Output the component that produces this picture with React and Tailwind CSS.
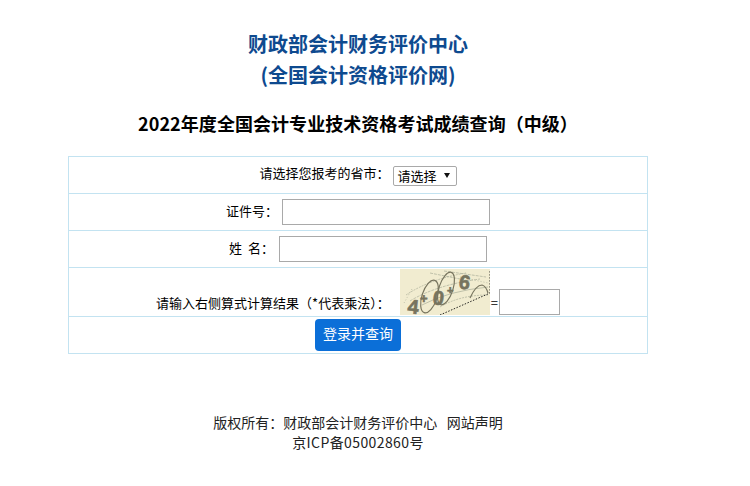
export default function App() {
  return (
    <div className="w-[750px] min-h-[486px] bg-white text-black text-[13px] font-['Noto_Sans_CJK_SC','Inter',sans-serif]">
      <div className="w-[716px] flex flex-col items-center pt-[28px]">
        <h1 className="text-[20px] leading-[31px] font-bold text-[#0e4a8f] text-center">
          财政部会计财务评价中心<br />(全国会计资格评价网)
        </h1>
        <h2 className="mt-[19px] text-[18px] leading-[28px] font-bold text-center tracking-[0.05px]">
          2022年度全国会计专业技术资格考试成绩查询（中级）
        </h2>
        <table className="mt-[19px] w-[580px] border-collapse text-center">
          <tbody>
            <tr className="h-[37px]">
              <td className="border border-[#c3e3f1] p-0 align-middle">
                <span className="relative top-[-1px]">请选择您报考的省市：</span>
                <span className="ml-[3px] inline-flex h-[20px] w-[64px] items-center justify-between rounded-[2px] border border-[#a9a9a9] pl-[4px] pr-[6px] align-middle">
                  <span className="leading-[16px]">请选择</span>
                  <svg viewBox="0 0 6 5" className="h-[5px] w-[6px]">
                    <polygon points="0,0 6,0 3,5" fill="#111" />
                  </svg>
                </span>
              </td>
            </tr>
            <tr className="h-[37px]">
              <td className="border border-[#c3e3f1] p-0 align-middle">
                证件号：
                <input className="ml-[4px] h-[26px] w-[208px] border border-[#a9a9a9] align-middle" />
              </td>
            </tr>
            <tr className="h-[37px]">
              <td className="border border-[#c3e3f1] p-0 align-middle">
                姓&nbsp;&nbsp;名：
                <input className="ml-[5px] h-[26px] w-[208px] border border-[#a9a9a9] align-middle" />
              </td>
            </tr>
            <tr className="h-[49px]">
              <td className="border border-[#c3e3f1] p-0 align-bottom">
                <div className="flex items-end justify-center pb-[1px]">
                  <span className="mb-[3px]">请输入右侧算式计算结果（*代表乘法）：</span>
                  <svg viewBox="0 0 90 46" className="ml-[10px] h-[46px] w-[90px] shrink-0">
                    <rect width="90" height="46" fill="#f1ecd0" />
                    <g stroke="#a9ad98" strokeWidth="0.7" fill="none">
                      <path d="M6 26 Q30 10 66 4" strokeDasharray="2 1" />
                      <path d="M10 32 Q36 16 80 10" strokeDasharray="3 1" />
                      <path d="M22 36 Q48 22 88 18" />
                      <path d="M40 38 Q60 26 88 26" strokeDasharray="2 1" />
                      <path d="M30 4 L70 12 M44 2 L86 8" strokeDasharray="3 1" />
                      <path d="M4 34 L12 20 M60 8 L88 14" strokeDasharray="1 2" />
                    </g>
                    <g stroke="#77745e" strokeWidth="1.2" fill="none">
                      <ellipse cx="29.5" cy="27.5" rx="7.5" ry="17" transform="rotate(18 29.5 27.5)" />
                      <ellipse cx="46" cy="19.5" rx="7" ry="17" transform="rotate(18 46 19.5)" />
                      <path d="M70 29 Q76 16 82 16 Q86 17 88 24" />
                    </g>
                    <g fill="#77745e" stroke="#77745e" strokeWidth="0.6" fontFamily="'Liberation Sans',sans-serif" fontWeight="700">
                      <text x="7" y="44" fontSize="20" transform="rotate(6 7 44)">4</text>
                      <text x="20" y="34" fontSize="13">+</text>
                      <text x="32" y="35" fontSize="20" transform="rotate(8 32 35)">0</text>
                      <text x="47" y="25" fontSize="11">+</text>
                      <text x="58" y="19" fontSize="20" transform="rotate(10 58 19)">6</text>
                    </g>
                    <path d="M40 46 L90 24 L90 1" stroke="#111" strokeWidth="0.9" strokeDasharray="1.5 1.5" fill="none" />
                  </svg>
                  <span className="mx-[1px] mb-[3px]">=</span>
                  <input className="h-[26px] w-[61px] border border-[#a9a9a9]" />
                </div>
              </td>
            </tr>
            <tr className="h-[37px]">
              <td className="border border-[#c3e3f1] p-0 align-middle">
                <button className="h-[32px] w-[86px] rounded-[4px] bg-[#0b6fd8] pb-[3px] text-[14px] text-white align-middle">
                  登录并查询
                </button>
              </td>
            </tr>
          </tbody>
        </table>
        <div className="mt-[58px] text-[14px] leading-[20px] text-center text-[#222]">
          <div>版权所有：财政部会计财务评价中心&nbsp;&nbsp;&nbsp;网站声明</div>
          <div className="tracking-[0.4px]">京ICP备05002860号</div>
        </div>
      </div>
    </div>
  );
}
